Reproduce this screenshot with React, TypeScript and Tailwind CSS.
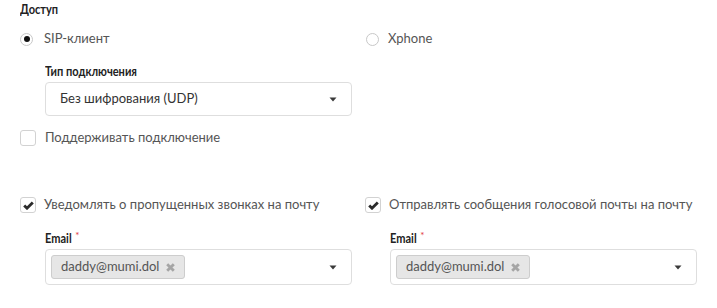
import React from 'react';

function Radio({ checked }: { checked?: boolean }) {
  return (
    <span className="flex h-[13px] w-[13px] shrink-0 items-center justify-center rounded-full border border-[#c8c8c8] bg-white">
      {checked && <span className="h-[6px] w-[6px] rounded-full bg-[#111]" />}
    </span>
  );
}

function Checkbox({ checked }: { checked?: boolean }) {
  return (
    <span className="flex h-[16px] w-[16px] shrink-0 items-center justify-center rounded-[3px] border border-[#d2d2d2] bg-white">
      {checked && (
        <svg width="11" height="9" viewBox="0 0 11 9">
          <path d="M1.2 4.4 L4 7.2 L9.8 1.4" fill="none" stroke="#2b2b2b" strokeWidth="2.8" strokeLinejoin="miter" />
        </svg>
      )}
    </span>
  );
}

function Caret() {
  return (
    <svg width="8" height="5" viewBox="0 0 8 5" className="shrink-0">
      <path d="M0.5 0.5 H7.5 L4 4.5 Z" fill="#3a3a3a" />
    </svg>
  );
}

// field captions are narrow and bold in the design
const caption = 'inline-block origin-left scale-x-[0.85] text-[13px] font-bold text-[#222]';

function EmailField() {
  return (
    <div className="pl-[25px]">
      <div className="mt-[17px] flex h-[16px] items-center leading-[16px]">
        <span className={caption}>Email</span>
        <span className="-ml-[1px] -mt-[6px] text-[10px] text-[#e23b3b]">*</span>
      </div>
      <div className="mt-[3px] flex h-[36px] items-center justify-between rounded-[4px] border border-[#dedede] bg-white pl-[5px] pr-[14px]">
        <span className="flex h-[24px] w-[134px] items-center rounded-[3px] border border-[#cdcdcd] bg-[#e6e6e6] pl-[9px] text-[13px] text-[#555]">
          daddy@mumi.dol
          <svg width="9" height="9" viewBox="0 0 9 9" className="ml-[7px]">
            <path d="M1.2 1.2 L7.8 7.8 M7.8 1.2 L1.2 7.8" stroke="#a5a5a5" strokeWidth="2.8" />
          </svg>
        </span>
        <Caret />
      </div>
    </div>
  );
}

export default function App() {
  return (
    <div className="h-[308px] w-[717px] overflow-hidden bg-white px-[20px] font-['Lato','Liberation_Sans',sans-serif] text-[#555]">
      <div className="h-[15px] leading-[15px]">
        <span className={caption}>Доступ</span>
      </div>

      <div className="mt-[16px] grid grid-cols-2 gap-[13px]">
        <label className="flex h-[16px] items-center gap-[11px] text-[13px]">
          <Radio checked />
          SIP-клиент
        </label>
        <label className="flex h-[16px] items-center gap-[9px] pl-[1px] text-[13px]">
          <Radio />
          Xphone
        </label>
      </div>

      <div className="w-[332px] pl-[25px]">
        <div className="mt-[15px] h-[16px] leading-[16px]">
          <span className={caption}>Тип подключения</span>
        </div>
        <div className="mt-[4px] flex h-[34px] items-center justify-between rounded-[4px] border border-[#dedede] bg-white pl-[14px] pr-[14px] text-[13px] text-[#333]">
          Без шифрования (UDP)
          <Caret />
        </div>
      </div>

      <label className="mt-[14px] flex h-[16px] items-center gap-[9px] text-[13px]">
        <Checkbox />
        Поддерживать подключение
      </label>

      <div className="mt-[51px] grid grid-cols-2 gap-[13px]">
        <div>
          <label className="flex h-[16px] items-center gap-[8px] text-[13px]">
            <Checkbox checked />
            Уведомлять о пропущенных звонках на почту
          </label>
          <EmailField />
        </div>
        <div>
          <label className="flex h-[16px] items-center gap-[8px] text-[13px]">
            <Checkbox checked />
            Отправлять сообщения голосовой почты на почту
          </label>
          <EmailField />
        </div>
      </div>
    </div>
  );
}
